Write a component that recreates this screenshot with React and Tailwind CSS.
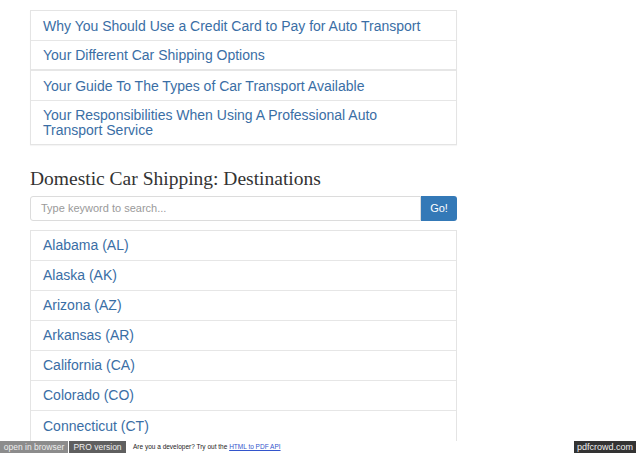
export default function App() {
  const guides = [
    "Why You Should Use a Credit Card to Pay for Auto Transport",
    "Your Different Car Shipping Options",
    "Your Guide To The Types of Car Transport Available",
  ];
  const states = [
    "Alabama (AL)",
    "Alaska (AK)",
    "Arizona (AZ)",
    "Arkansas (AR)",
    "California (CA)",
    "Colorado (CO)",
    "Connecticut (CT)",
  ];
  return (
    <div className="w-[638px] h-[453px] bg-white flex flex-col overflow-hidden" style={{ fontFamily: '"Liberation Sans", Arial, sans-serif' }}>
      <div className="h-[441px] overflow-hidden pl-[30px] pt-[10px]">
        <div className="w-[427px] border border-[#e4e4e4] shadow-[0_1px_1px_rgba(0,0,0,0.04)]">
          {guides.map((g, i) => (
            <div key={i} className={`h-[30px] px-[12px] flex items-center text-[14px] leading-[16px] text-[#3a6ea5] ${i === 1 ? "border-b-2" : "border-b"} border-[#e6e6e6]`}>
              {g}
            </div>
          ))}
          <div className="h-[43px] px-[12px] flex flex-col justify-center text-[14px] leading-[15px] text-[#3a6ea5]">
            <span>Your Responsibilities When Using A Professional Auto</span>
            <span>Transport Service</span>
          </div>
        </div>
        <h2 className="mt-[22px] text-[19.5px] leading-[24px] text-[#333]" style={{ fontFamily: '"Liberation Serif", "DejaVu Serif", serif' }}>
          Domestic Car Shipping: Destinations
        </h2>
        <div className="mt-[5px] w-[427px] h-[25px] flex">
          <div className="flex-1 border border-[#dcdcdc] rounded-l-[3px] flex items-center pl-[10px] text-[11px] text-[#9a9a9a]">
            Type keyword to search...
          </div>
          <div className="w-[36px] bg-[#3479b7] rounded-r-[3px] flex items-center justify-center text-[11px] text-white">
            Go!
          </div>
        </div>
        <div className="mt-[9px] w-[427px] h-[220px] border-x border-t border-[#e4e4e4]">
          {states.map((s, i) => (
            <div key={i} className={`h-[30px] px-[12px] flex items-center text-[14px] text-[#3a6ea5] ${i < states.length - 1 ? "border-b border-[#e6e6e6]" : ""}`}>
              {s}
            </div>
          ))}
        </div>
      </div>
      <div className="h-[12px] flex items-center whitespace-nowrap">
        <div className="h-[12px] w-[68px] bg-[#8c8c8c] text-[#eee] text-[8.5px] leading-[10px] flex items-center justify-center">open in browser</div>
        <div className="h-[12px] ml-[1px] w-[57px] bg-[#5f5f5f] text-[#eee] text-[8.5px] leading-[10px] flex items-center justify-center">PRO version</div>
        <div className="ml-[7px] text-[#222] text-[6.5px] leading-[8px]">
          Are you a developer? Try out the <span className="text-[#3355cc] underline">HTML to PDF API</span>
        </div>
        <div className="ml-auto mr-[2px] h-[12px] bg-[#333] text-[#eee] text-[9px] leading-[10px] flex items-center px-[3px]">pdfcrowd.com</div>
      </div>
    </div>
  );
}
